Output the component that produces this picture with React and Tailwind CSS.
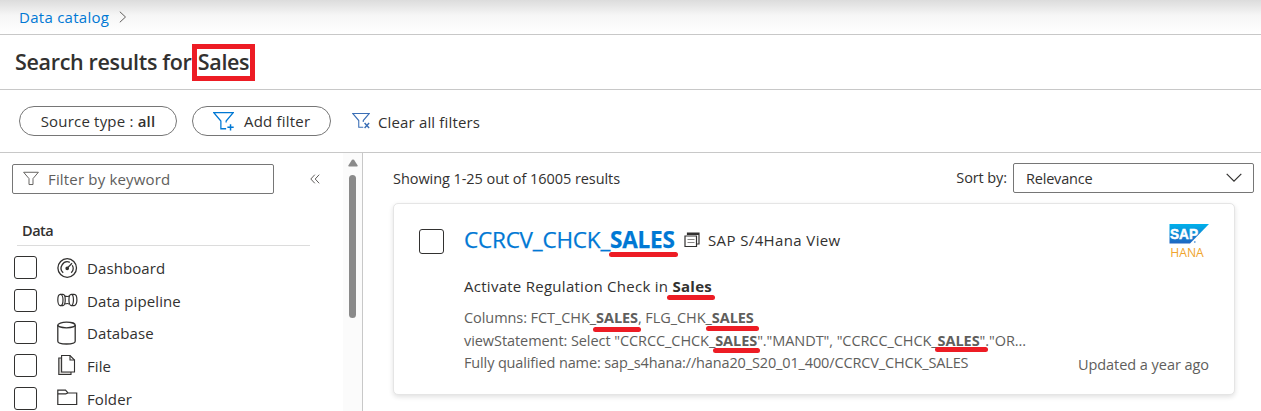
const ink = "text-[#323130]";

function Mark({ children, bar, className = "" }) {
  return (
    <span className={"relative font-bold " + className}>
      {children}
      <span className={"absolute rounded-full bg-[#ed1c24] " + bar} />
    </span>
  );
}

function Funnel({ className, badge, size = 20 }) {
  return (
    <svg width={size} height={size} viewBox="0 0 20 20" fill="none" stroke="currentColor" strokeWidth="1.2" className={className}>
      <path d="M12.5 16.9H7.5V9.5L.8 1.6H19.2L12.5 9.5V11" />
      {badge === "plus" && <path d="M16.7 12.5v6M13.7 15.5h6" strokeWidth="1.4" />}
      {badge === "x" && <path d="M14 12.3l5 5.5M19 12.3l-5 5.5" strokeWidth="1.6" />}
      {!badge && <path d="M12.5 11v5.9" />}
    </svg>
  );
}

function DashboardIcon() {
  return (
    <svg width="21" height="22" viewBox="0 0 21 22" fill="none" stroke="#323130" strokeWidth="1.3">
      <circle cx="10.2" cy="11" r="9.3" />
      <path d="M6.2 15.8A6.3 6.3 0 0 1 12.8 5.3M15.3 8.2A6.3 6.3 0 0 1 14.2 15.8" />
      <path d="M11 10.4L15 6.2" />
      <circle cx="10.2" cy="11.3" r="1.2" fill="#323130" />
    </svg>
  );
}

function PipelineIcon() {
  return (
    <svg width="21" height="14" viewBox="0 0 21 14" fill="none" stroke="#323130" strokeWidth="1.2">
      <ellipse cx="3.4" cy="7" rx="2.6" ry="5.6" />
      <path d="M3.4 1.4H6C9 1.4 9 12.6 6 12.6H3.4M8.2 3Q10.2 4 12.2 3M8.2 11Q10.2 10 12.2 11" />
      <path d="M14.2 1.4C11.2 1.4 11.2 12.6 14.2 12.6M14.2 1.4C17.2 1.4 17.2 12.6 14.2 12.6M14.2 1.4H17.2C20.8 1.4 20.8 12.6 17.2 12.6H14.2" />
    </svg>
  );
}

function DatabaseIcon() {
  return (
    <svg width="20" height="24" viewBox="0 0 20 24" fill="none" stroke="#323130" strokeWidth="1.3">
      <ellipse cx="9.5" cy="4" rx="8.7" ry="2.8" />
      <path d="M.8 4V20.2C.8 21.8 4.5 23 9.5 23S18.2 21.8 18.2 20.2V4" />
    </svg>
  );
}

function FileIcon() {
  return (
    <svg width="20" height="22" viewBox="0 0 20 22" fill="none" stroke="#323130" strokeWidth="1.1">
      <path d="M4.5 4H1.8V20.5H14V18" fill="#d2d0ce" />
      <path d="M4.6 1.5H13L17.5 6V18H4.6Z" fill="#fff" />
      <path d="M13 1.5V6H17.5" />
    </svg>
  );
}

function FolderIcon() {
  return (
    <svg width="21" height="17" viewBox="0 0 21 17" fill="none" stroke="#323130" strokeWidth="1.2">
      <path d="M.8 15.5V1.2H8.5L11 4H19.7V15.5Z" />
      <path d="M.8 4.8H8.8L10.8 4" />
    </svg>
  );
}

const types = [
  ["Dashboard", DashboardIcon, "mt-px"],
  ["Data pipeline", PipelineIcon, "mt-0"],
  ["Database", DatabaseIcon, "mt-0"],
  ["File", FileIcon, "-mt-px"],
  ["Folder", FolderIcon, "-mt-[2px]"],
];

function Sidebar() {
  return (
    <aside className="flex w-[363px] shrink-0 border-r border-[#c8c8c8]">
      <div className="w-[343px] pt-[11px]">
        <div className="flex items-center">
          <div className="ml-3 flex h-[30px] w-[262px] items-center rounded-xs border border-[#767676] pl-[10px] text-[#605e5c]">
            <Funnel size={16} className="mr-[9px]" />
            <span className="text-[15px] tracking-[0.17px]">Filter by keyword</span>
          </div>
          <svg width="10" height="10" viewBox="0 0 10 10" fill="none" stroke="#605e5c" className="ml-9">
            <path d="M4.8.7L.8 5L4.8 9.3M9.2.7L5.2 5L9.2 9.3" />
          </svg>
        </div>
        <div className="ml-[17px] mt-[26px] h-[26px] w-[293px] border-b border-[#dcdcdc] pl-[5px] text-[14.5px] font-semibold leading-[22px] tracking-[-0.5px]">
          Data
        </div>
        <div className="pt-[5px]">
          {types.map(([name, Icon, nudge]) => (
            <div key={name} className="flex h-[32.75px] items-center pl-[14px]">
              <span className="h-[23px] w-[23px] rounded-[3px] border border-[#323130]" />
              <span className={"ml-[20px] flex w-[30px] items-center " + nudge}><Icon /></span>
              <span className="pt-px text-[15px] leading-5 tracking-[0.1px]">{name}</span>
            </div>
          ))}
        </div>
      </div>
      <div className="flex w-[19px] flex-col items-center bg-[#fbfbfb] pt-[6px]">
        <svg width="10" height="8" viewBox="0 0 10 8"><path d="M4 .8Q5 0 6 .8L9.7 6.5Q9.8 7.5 9 7.5H1Q.2 7.5.3 6.5Z" fill="#8a8a8a" /></svg>
        <span className="mt-2 h-[143px] w-[7px] rounded-full bg-[#8a8a8a]" />
      </div>
    </aside>
  );
}

function SapLogo() {
  return (
    <svg width="41" height="36" viewBox="0 0 41 36">
      <defs>
        <linearGradient id="sap" x1="0" y1="0" x2="0" y2="1">
          <stop offset="0" stopColor="#00b1eb" />
          <stop offset="1" stopColor="#1f64c0" />
        </linearGradient>
      </defs>
      <path d="M.5 0H40L21 19.5H.5Z" fill="url(#sap)" />
      <text x="1" y="15.2" fontSize="15" fontWeight="700" fill="#fff" stroke="#fff" strokeWidth=".5" textLength="28" lengthAdjust="spacingAndGlyphs" fontFamily="Liberation Sans, sans-serif">SAP</text>
      <circle cx="25.8" cy="18" r=".9" fill="#6aa5dc" />
      <text x="1.3" y="33" fontSize="12.5" fill="#f0a42c" textLength="33.5" lengthAdjust="spacingAndGlyphs" fontFamily="Open Sans, sans-serif">HANA</text>
    </svg>
  );
}

function ResultCard() {
  return (
    <article className="mt-[10px] flex h-[192px] w-[842px] rounded-[5px] border border-[#e5e5e5] bg-white pl-[25px] shadow-[0_2px_5px_rgba(0,0,0,0.12)]">
      <span className="mt-[25px] h-[25px] w-[25px] shrink-0 rounded-[3px] border border-[#323130]" />
      <div className="ml-[20px] w-[600px] pt-[20px]">
        <div className="flex h-8 items-center whitespace-nowrap">
          <span className="w-[220px] text-[22.5px] font-medium leading-8 tracking-[-0.2px] text-[#0078d4] [-webkit-text-stroke:0.25px_#0078d4]">
            CCRCV_CHCK_<Mark bar="-left-[1px] top-[28px] h-[5px] w-[69px]">SALES</Mark>
          </span>
          <svg width="16" height="16" viewBox="0 0 16 16" fill="none" stroke="#323130" strokeWidth="1.2">
            <path d="M3.5 3V1H15V12H12.5" />
            <path d="M3.5 2H15" strokeWidth="2" />
            <path d="M1 4H12.5V14.5H1Z" />
            <path d="M3.5 7.5H10.5M3.5 10.5H10.5" stroke="#8a8886" />
          </svg>
          <span className="ml-2 text-[15px] tracking-[0.38px]">SAP S/4Hana View</span>
        </div>
        <p className="mt-[20px] h-5 whitespace-nowrap text-[15px] leading-5 tracking-[0.27px]">
          Activate Regulation Check in <Mark bar="-left-[5px] top-[19px] h-[5px] w-[48px]">Sales</Mark>
        </p>
        <div className="mt-[10px] whitespace-nowrap text-[14.5px] leading-[23px] tracking-[-0.07px] text-[#605e5c]">
          <p>Columns: FCT_CHK_<Mark bar="-left-[3px] top-[19px] h-[5px] w-[48px]">SALES</Mark>, FLG_CHK_<Mark bar="-left-[6px] top-[18px] h-[5px] w-[53px]">SALES</Mark></p>
          <p>viewStatement: Select "CCRCC_CHCK_<Mark bar="-left-[2px] top-[17px] h-[5px] w-[47px]">SALES</Mark>"."MANDT", "CCRCC_CHCK_<Mark bar="-left-[3px] top-[16px] h-[5px] w-[53px]">SALES</Mark>"."OR...</p>
          <p className="-mt-px tracking-[-0.14px]">Fully qualified name: sap_s4hana://hana20_S20_01_400/CCRCV_CHCK_SALES</p>
        </div>
      </div>
      <div className="flex flex-1 flex-col items-end justify-between pb-[19px] pr-[25px] pt-[20px]">
        <div className="-mr-px"><SapLogo /></div>
        <span className="whitespace-nowrap text-[14.5px] leading-5 tracking-[-0.05px] text-[#605e5c]">Updated a year ago</span>
      </div>
    </article>
  );
}

export default function App() {
  return (
    <div className={"flex h-[411px] w-[1261px] flex-col overflow-hidden bg-white font-['Open_Sans','Noto_Sans',sans-serif] " + ink}>
      <nav className="flex h-[35px] shrink-0 items-center border-b border-[#c8c8c8] bg-linear-to-b from-[#dcdcdc] via-[#f6f6f6] via-45% to-white pl-[19px] text-[#0078d4]">
        <span className="text-[15px] tracking-[0.27px]">Data catalog</span>
        <svg width="8" height="12" viewBox="0 0 8 12" fill="none" stroke="#605e5c" className="ml-[10px]">
          <path d="M.8.7L6.5 6L.8 11.3" />
        </svg>
      </nav>
      <header className="flex h-[55px] shrink-0 items-center border-b border-[#c8c8c8] pl-[15px]">
        <h1 className="flex items-center whitespace-nowrap text-[21.5px] font-semibold tracking-[-0.33px]">
          <span className="w-[177px]">Search results for</span>
          <span className="flex h-[37px] w-[63px] items-center justify-center border-5 border-[#ed1c24]">Sales</span>
        </h1>
      </header>
      <div className="flex h-[63px] shrink-0 items-center border-b border-[#c8c8c8] pl-[19px] text-[15px] tracking-[0.2px]">
        <button className="flex h-[30px] w-[158px] items-center justify-center rounded-full border border-[#767676] whitespace-pre">
          Source type : <b className="font-semibold">all</b>
        </button>
        <button className="ml-[15px] flex h-[30px] w-[139px] items-center rounded-full border border-[#767676] pl-5">
          <Funnel badge="plus" size={21} className="mr-[10px] text-[#0078d4]" />
          <span>Add filter</span>
        </button>
        <button className="ml-[21px] flex items-center">
          <Funnel badge="x" size={18} className="mr-[8px] text-[#3b6fb6]" />
          <span className="pt-[2px] tracking-[0.15px]">Clear all filters</span>
        </button>
      </div>
      <div className="flex min-h-0 flex-1">
        <Sidebar />
        <main className="flex-1 pl-[30px] pt-[10px]">
          <div className="flex h-[30px] items-center text-[14.5px] tracking-[-0.06px]">
            <span className="pt-[2px]">Showing 1-25 out of 16005 results</span>
            <span className="ml-auto mr-[6px] tracking-[-0.1px]">Sort by:</span>
            <div className="mr-[7px] flex h-[30px] w-[241px] items-center justify-between rounded-xs border border-[#767676] pl-3 pr-[11px]">
              <span className="pt-[2px] tracking-[-0.2px]">Relevance</span>
              <svg width="16" height="10" viewBox="0 0 16 10" fill="none" stroke="#323130" strokeWidth="1.2"><path d="M.7.8L8 8.2L15.3.8" /></svg>
            </div>
          </div>
          <ResultCard />
        </main>
      </div>
    </div>
  );
}
